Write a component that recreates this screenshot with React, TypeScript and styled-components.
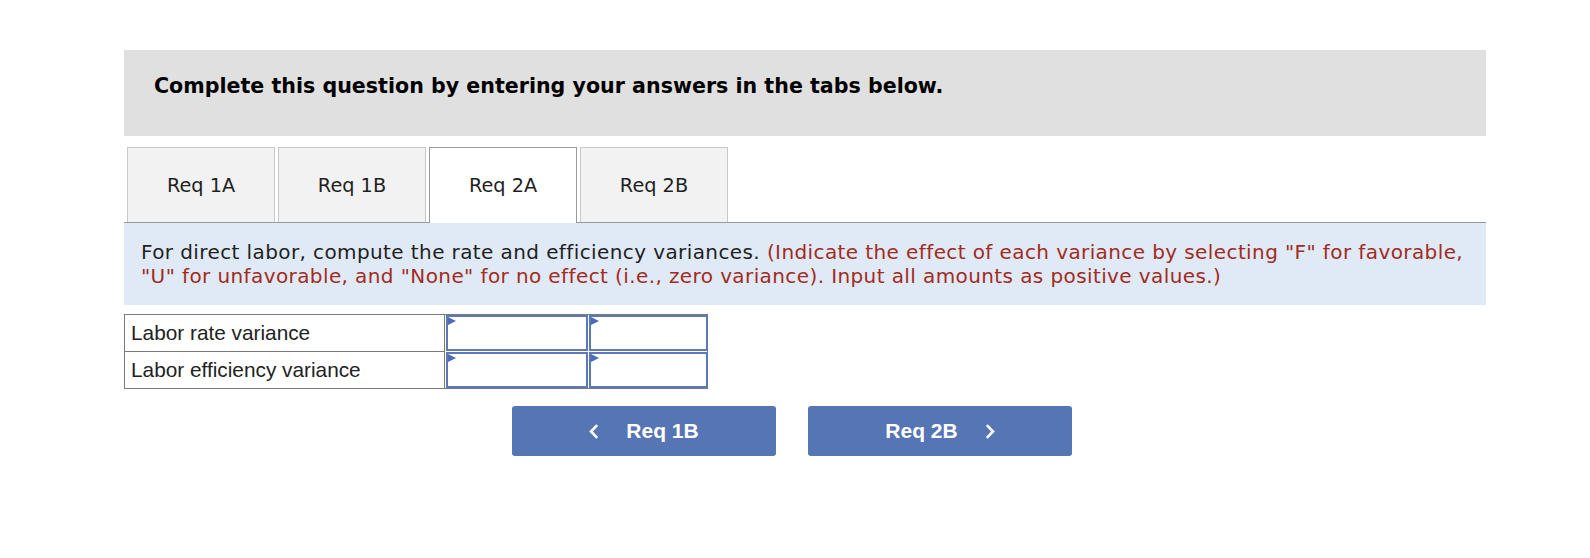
import React from "react";
import styled, { createGlobalStyle } from "styled-components";

const Global = createGlobalStyle`
  html, body { margin: 0; padding: 0; background: #ffffff; }
  body { font-family: "DejaVu Sans", Verdana, sans-serif; color: #1f1f1f; }
`;

const Page = styled.div`
  width: 1590px;
  height: 558px;
  padding-top: 50px;
  box-sizing: border-box;
`;

const Container = styled.div`
  margin-left: 124px;
  width: 1362px;
`;

const Header = styled.div`
  height: 86px;
  box-sizing: border-box;
  background: #e0e0e0;
  padding: 24px 0 0 30px;
  font-family: "DejaVu Sans", Verdana, sans-serif;
  font-weight: bold;
  font-size: 20.6px;
  color: #000;
`;

const TabBar = styled.div`
  display: flex;
  align-items: flex-start;
  gap: 3px;
  margin-top: 11px;
  padding-left: 3px;
  border-bottom: 1px solid #9a9a9a;
`;

const Tab = styled.div<{ $active?: boolean }>`
  position: relative;
  width: 148px;
  height: ${(p) => (p.$active ? 76 : 75)}px;
  margin-bottom: ${(p) => (p.$active ? -1 : 0)}px;
  padding-bottom: ${(p) => (p.$active ? 1 : 0)}px;
  box-sizing: border-box;
  display: flex;
  align-items: center;
  justify-content: center;
  background: ${(p) => (p.$active ? "#ffffff" : "#f2f2f2")};
  border: 1px solid ${(p) => (p.$active ? "#9a9a9a" : "#c8c8c8")};
  border-bottom: none;
  font-size: 19.3px;
  color: #1f1f1f;
`;

const Instructions = styled.div`
  background: #dfeaf6;
  padding: 17px 17px 17px 17px;
  font-size: 20px;
  letter-spacing: 0.4px;
  line-height: 24px;
  color: #1f1f1f;
  white-space: nowrap;
`;

const Note = styled.span`
  color: #a22b22;
`;

const Table = styled.div`
  margin-top: 9px;
  width: 584px;
  box-sizing: border-box;
  border: 1px solid #7a7a7a;
  font-family: "Liberation Sans", Arial, sans-serif;
`;

const Row = styled.div`
  display: grid;
  grid-template-columns: 320px 142px 119px;
  column-gap: 1px;
  align-items: start;
`;

const LabelCell = styled.div<{ $first?: boolean }>`
  height: ${(p) => (p.$first ? 37 : 36)}px;
  box-sizing: border-box;
  border-right: 1px solid #7a7a7a;
  border-bottom: ${(p) => (p.$first ? "1px solid #7a7a7a" : "none")};
  padding-left: 6px;
  font-size: 20.8px;
  line-height: 36px;
  color: #222;
  white-space: nowrap;
`;

const InputBox = styled.div`
  position: relative;
  height: 36px;
  box-sizing: border-box;
  border: 2px solid #5b79b9;
  background: #fff;
`;

const Flag = styled.span`
  position: absolute;
  top: 0;
  left: 0;
  width: 0;
  height: 0;
  border-top: 4.5px solid transparent;
  border-bottom: 4.5px solid transparent;
  border-left: 8px solid #4c6db5;
`;

const ButtonRow = styled.div`
  display: flex;
  gap: 32px;
  margin-top: 17px;
  padding-left: 388px;
`;

const NavButton = styled.button`
  width: 264px;
  height: 50px;
  border: none;
  border-radius: 3px;
  background: #5575b5;
  color: #ffffff;
  font-family: "Liberation Sans", Arial, sans-serif;
  font-weight: bold;
  font-size: 21px;
  display: flex;
  align-items: center;
  justify-content: center;
  gap: 27px;
  padding: 0;
  cursor: pointer;
`;

const Chevron = ({ dir }: { dir: "left" | "right" }) => (
  <svg width="10" height="15" viewBox="0 0 10 15" aria-hidden="true">
    <polyline
      points={dir === "left" ? "8.2,1.2 2,7.5 8.2,13.8" : "1.8,1.2 8,7.5 1.8,13.8"}
      fill="none"
      stroke="#ffffff"
      strokeWidth="2.6"
      strokeLinecap="butt"
      strokeLinejoin="miter"
    />
  </svg>
);

const tabs = ["Req 1A", "Req 1B", "Req 2A", "Req 2B"];
const rows = ["Labor rate variance", "Labor efficiency variance"];

export default function App() {
  return (
    <>
      <Global />
      <Page>
        <Container>
          <Header>Complete this question by entering your answers in the tabs below.</Header>
          <TabBar>
            {tabs.map((t) => (
              <Tab key={t} $active={t === "Req 2A"}>
                {t}
              </Tab>
            ))}
          </TabBar>
          <Instructions>
            For direct labor, compute the rate and efficiency variances.{" "}
            <Note>
              (Indicate the effect of each variance by selecting "F" for favorable,
              <br />
              "U" for unfavorable, and "None" for no effect (i.e., zero variance). Input all amounts as positive
              values.)
            </Note>
          </Instructions>
          <Table>
            {rows.map((r, i) => (
              <Row key={r}>
                <LabelCell $first={i === 0}>{r}</LabelCell>
                <InputBox>
                  <Flag />
                </InputBox>
                <InputBox>
                  <Flag />
                </InputBox>
              </Row>
            ))}
          </Table>
          <ButtonRow>
            <NavButton>
              <Chevron dir="left" />
              <span>Req 1B</span>
            </NavButton>
            <NavButton>
              <span>Req 2B</span>
              <Chevron dir="right" />
            </NavButton>
          </ButtonRow>
        </Container>
      </Page>
    </>
  );
}
